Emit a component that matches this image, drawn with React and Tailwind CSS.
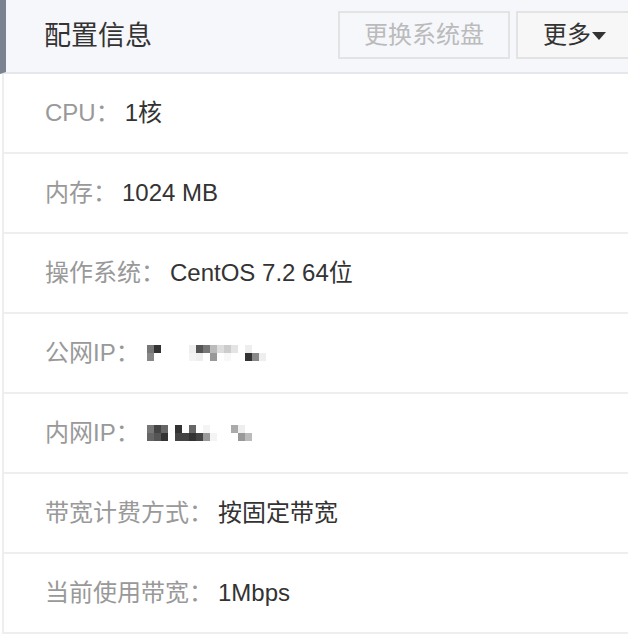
const rows = [
  { label: "CPU：", value: "1核" },
  { label: "内存：", value: "1024 MB" },
  { label: "操作系统：", value: "CentOS 7.2 64位" },
  { label: "公网IP：", value: "masked1" },
  { label: "内网IP：", value: "masked2" },
  { label: "带宽计费方式：", value: "按固定带宽" },
  { label: "当前使用带宽：", value: "1Mbps" },
];

function Pixels({ cells }) {
  return (
    <div className="flex items-center h-[20px]">
      {cells.map((c, i) => (
        <div key={i} className="flex flex-col">
          <div className="w-[7px] h-[8px]" style={{ background: c[0] }} />
          <div className="w-[7px] h-[8px]" style={{ background: c[1] }} />
        </div>
      ))}
    </div>
  );
}

const W = "#ffffff";
const publicIp = [
  ["#ffffff", "#ffffff"], ["#777", "#888"], ["#333", "#fff"], [W, W], [W, W], [W, W], [W, W],
  ["#eee", "#f4f4f4"], ["#555", "#eee"], ["#777", "#fff"], ["#bbb", "#999"], ["#ddd", "#fff"], ["#ccc", "#f8f8f8"], ["#e4e4e4", "#fff"],
  [W, W], ["#eee", "#333"], ["#fff", "#888"], ["#fff", "#eee"],
];
const privateIp = [
  ["#fff", "#fff"], ["#777", "#666"], ["#444", "#555"], ["#666", "#333"], [W, W], ["#333", "#444"],
  ["#fff", "#444"], ["#666", "#333"], ["#fff", "#444"], ["#f4f4f4", "#999"], ["#fff", "#f4f4f4"], [W, W], [W, W],
  ["#aaa", "#fff"], ["#eee", "#999"], ["#fff", "#bbb"],
];

export default function App() {
  return (
    <div
      className="w-[628px] h-[638px] bg-white overflow-hidden"
      style={{ fontFamily: '"Liberation Sans", "Noto Sans CJK SC", sans-serif' }}
    >
      <div className="h-[74px] flex items-center bg-[#f6f7fb] border-l-[6px] border-[#7b8290] border-b-2 border-b-[#e6e7eb]">
        <div className="flex-1 pl-[38px] text-[27px] text-[#333]">配置信息</div>
        <div className="flex gap-[6px] mb-[2px]">
          <button className="w-[172px] h-[48px] border-2 border-[#e3e3e3] bg-[#f6f7fb] text-[24px] text-[#bbb]">
            更换系统盘
          </button>
          <button className="w-[112px] h-[48px] border-2 border-r-0 border-[#e3e3e3] bg-[#f7f7f7] text-[24px] text-[#333] pl-[25px] text-left flex items-center">
            更多
            <svg width="14" height="8" viewBox="0 0 14 8" className="ml-[1px] mt-[2px]">
              <path d="M0 0 L14 0 L7 8 Z" fill="#333" />
            </svg>
          </button>
        </div>
      </div>
      <div className="ml-[2px] border-l-2 border-[#eeeeee]">
        {rows.map((r) => (
          <div
            key={r.label}
            className="h-[80px] flex items-center pl-[41px] border-b-2 border-[#eeeeee] text-[24px]"
          >
            <span className="text-[#999]">{r.label}</span>
            {r.value === "masked1" ? (
              <Pixels cells={publicIp} />
            ) : r.value === "masked2" ? (
              <Pixels cells={privateIp} />
            ) : (
              <span className="ml-[5px] text-[#333]">{r.value}</span>
            )}
          </div>
        ))}
      </div>
    </div>
  );
}
